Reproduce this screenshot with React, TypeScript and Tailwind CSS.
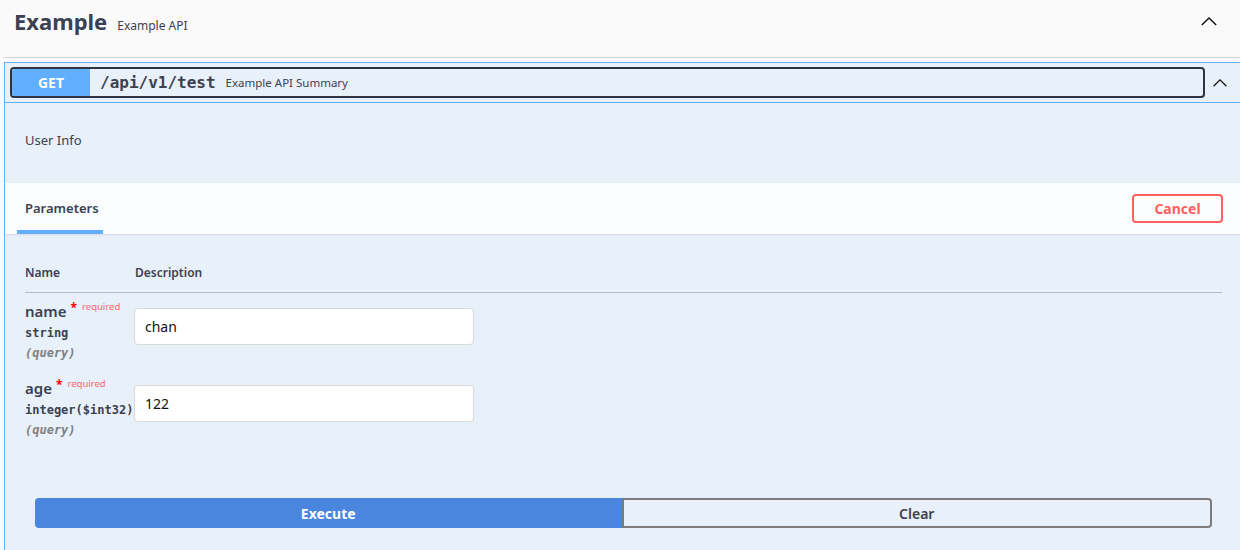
import React from 'react';

const sans = { fontFamily: '"Noto Sans", "Open Sans", sans-serif' };
const mono = { fontFamily: '"DejaVu Sans Mono", "Liberation Mono", monospace' };

const ChevronUp = ({ className }: { className?: string }) => (
    <svg viewBox="0 0 20 12" className={className} fill="none" stroke="#111" strokeWidth={1.6}>
        <polyline points="2,10 10,2 18,10" />
    </svg>
);

type Param = { name: string; type: string; value: string };

const params: Param[] = [
    { name: 'name', type: 'string', value: 'chan' },
    { name: 'age', type: 'integer($int32)', value: '122' },
];

const ParamRow = ({ p, first }: { p: Param; first: boolean }) => (
    <div className={`flex items-start ${first ? 'pt-[7px]' : 'pt-[16px]'}`}>
        <div className="w-[109px] flex flex-col">
            <div className="h-[22px] flex items-center">
                <span className="text-[15px] font-semibold text-[#3b4151] leading-none">{p.name}</span>
                <span className="text-[#ff0000] text-[12px] font-bold ml-[4px] -mt-[7px]">*</span>
                <span className="text-[9.5px] text-[#ff0000]/60 ml-[5px] -mt-[7px]">required</span>
            </div>
            <div className="h-[22px] flex items-center text-[12px] font-bold text-[#3b4151]" style={mono}>{p.type}</div>
            <div className="h-[17px] flex items-center text-[12px] italic font-bold text-[#808080]" style={mono}>(query)</div>
        </div>
        <div className="pt-[8px]">
            <div className="w-[340px] h-[37px] bg-white border border-[#d9d9d9] rounded-[4px] flex items-center px-[10px] text-[14px] text-[#111]">
                {p.value}
            </div>
        </div>
    </div>
);

const App = () => {
    return (
        <div className="w-[1240px] h-[550px] overflow-hidden bg-[#fafafa] text-[#3b4151]" style={sans}>
            {/* tag header */}
            <div className="ml-[4px] h-[58px] border-b border-[#d2d2d2] flex items-center justify-between pl-[10px] pr-[22px]">
                <div className="flex items-baseline -mt-[14px]">
                    <span className="text-[22px] font-bold text-[#3b4151]">Example</span>
                    <span className="text-[12px] ml-[10px] text-[#3b4151]">Example API</span>
                </div>
                <ChevronUp className="w-[18px] h-[11px] -mt-[14px]" />
            </div>

            {/* opblock */}
            <div className="mt-[4px] ml-[4px] w-[1238px] border-l border-t border-[#61affe] bg-[#e8f0fa]">
                <div className="h-[40px] border-b border-[#61affe] flex items-center pl-[5px]">
                    <div className="flex-1 h-[31px] border-2 border-[#2e3342] rounded-[4px] flex items-center overflow-hidden">
                        <div className="w-[78px] h-full bg-[#61affe] flex items-center justify-center text-white text-[14px] font-bold">GET</div>
                        <span className="ml-[10px] text-[16px] font-bold text-[#3b4151]" style={mono}>/api/v1/test</span>
                        <span className="ml-[10px] text-[11.5px] text-[#3b4151]">Example API Summary</span>
                    </div>
                    <div className="w-[37px] flex justify-start pl-[7px]">
                        <ChevronUp className="w-[16px] h-[10px]" />
                    </div>
                </div>

                <div className="h-[80px] flex items-center pl-[20px] pb-[4px] text-[13px] text-[#3b4151]">User Info</div>

                <div className="h-[51px] bg-white/80 shadow-[0_1px_2px_rgba(0,0,0,0.1)] flex items-center justify-between pl-[12px] pr-[19px]">
                    <div className="h-full flex flex-col justify-end">
                        <div className="px-[8px] pb-[12px] text-[13px] font-semibold text-[#3b4151]">Parameters</div>
                        <div className="w-[86px] h-[4px] bg-[#61affe]" />
                    </div>
                    <button className="w-[91px] h-[29px] border-2 border-[#ff6060] rounded-[4px] text-[#ff6060] text-[14px] font-bold flex items-center justify-center -mt-[1px]">
                        Cancel
                    </button>
                </div>

                <div className="px-[20px] pt-[30px]">
                    <div className="h-[29px] border-b border-[#3b4151]/30 flex items-start text-[12px] font-semibold text-[#3b4151]">
                        <span className="w-[110px]">Name</span>
                        <span>Description</span>
                    </div>
                    {params.map((p, i) => (
                        <ParamRow key={p.name} p={p} first={i === 0} />
                    ))}
                </div>

                <div className="flex px-[30px] mt-[60px] pb-[30px]">
                    <button className="flex-1 h-[30px] bg-[#4a85de] rounded-l-[4px] text-white text-[14px] font-bold">Execute</button>
                    <button className="flex-1 h-[30px] border-2 border-[#7b7b7b] rounded-r-[4px] text-[#3b4151] text-[14px] font-semibold">Clear</button>
                </div>
            </div>
        </div>
    );
};

export default App;
